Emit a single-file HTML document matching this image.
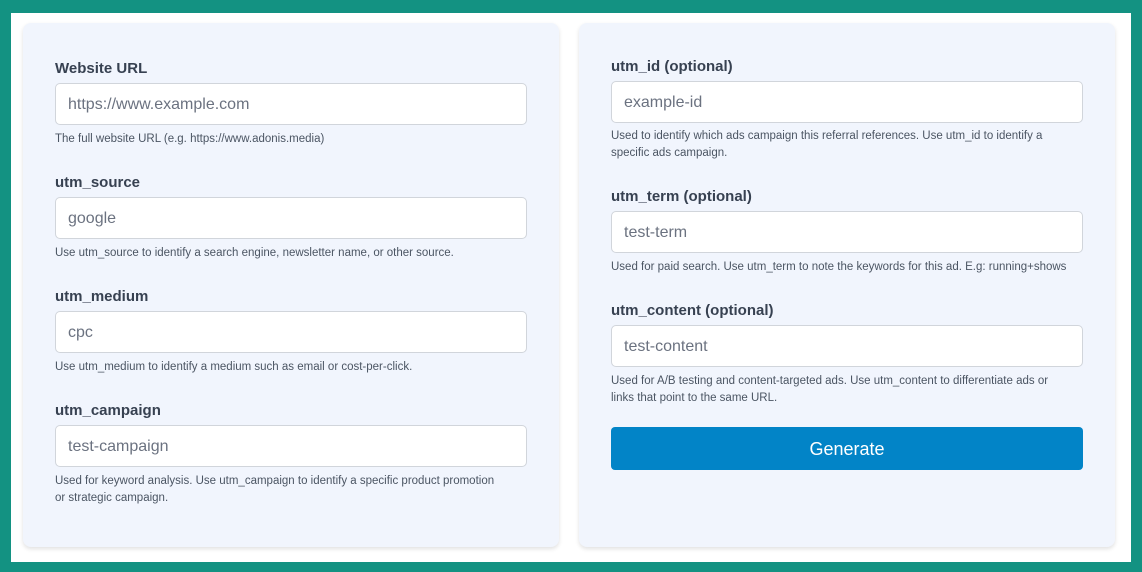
<!DOCTYPE html><html><head><style>
*{box-sizing:border-box;margin:0;padding:0}
body{width:1142px;height:572px;background:#139282;position:relative;font-family:"Liberation Sans",sans-serif;overflow:hidden}
.w{position:absolute;left:11px;top:13px;width:1120px;height:549px;background:#fff}
.c{position:absolute;top:23px;height:524px;background:#f1f5fd;border-radius:8px;box-shadow:0 2px 4px rgba(0,0,0,.12)}
.l{position:absolute;font-size:15px;font-weight:bold;color:#374151}
.i{position:absolute;height:42px;background:#fff;border:1px solid #d1d5db;border-radius:5px;font-size:16px;color:#6b7280;padding-left:12px;line-height:42px}
.h{position:absolute;font-size:11.5px;color:#4b5563;line-height:16.5px}
.b{position:absolute;left:611px;top:427px;width:472px;height:43px;background:#0284c7;border-radius:4px;color:#fff;font-size:18px;text-align:center;line-height:45px}
</style></head><body><div class="w"></div>
<div class="c" style="left:23px;width:536px"></div>
<div class="c" style="left:579px;width:536px"></div>
<div class="l" style="left:55px;top:60px">Website URL</div>
<div class="i" style="left:55px;top:83px;width:472px">https://www.example.com</div>
<div class="h" style="left:55px;top:131px">The full website URL (e.g. https://www.adonis.media)</div>
<div class="l" style="left:55px;top:174px">utm_source</div>
<div class="i" style="left:55px;top:197px;width:472px">google</div>
<div class="h" style="left:55px;top:245px">Use utm_source to identify a search engine, newsletter name, or other source.</div>
<div class="l" style="left:55px;top:288px">utm_medium</div>
<div class="i" style="left:55px;top:311px;width:472px">cpc</div>
<div class="h" style="left:55px;top:359px">Use utm_medium to identify a medium such as email or cost-per-click.</div>
<div class="l" style="left:55px;top:402px">utm_campaign</div>
<div class="i" style="left:55px;top:425px;width:472px">test-campaign</div>
<div class="h" style="left:55px;top:473px;width:440px">Used for keyword analysis. Use utm_campaign to identify a specific product promotion or strategic campaign.</div>
<div class="l" style="left:611px;top:58px">utm_id (optional)</div>
<div class="i" style="left:611px;top:81px;width:472px">example-id</div>
<div class="h" style="left:611px;top:128px;width:470px">Used to identify which ads campaign this referral references. Use utm_id to identify a specific ads campaign.</div>
<div class="l" style="left:611px;top:188px">utm_term (optional)</div>
<div class="i" style="left:611px;top:211px;width:472px">test-term</div>
<div class="h" style="left:611px;top:259px">Used for paid search. Use utm_term to note the keywords for this ad. E.g: running+shows</div>
<div class="l" style="left:611px;top:302px">utm_content (optional)</div>
<div class="i" style="left:611px;top:325px;width:472px">test-content</div>
<div class="h" style="left:611px;top:373px;width:445px">Used for A/B testing and content-targeted ads. Use utm_content to differentiate ads or links that point to the same URL.</div>
<div class="b">Generate</div>
</body></html>
